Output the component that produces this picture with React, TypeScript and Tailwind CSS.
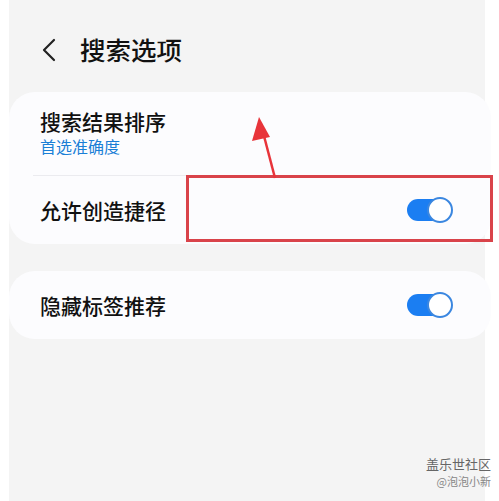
const FONT = { fontFamily: '"Noto Sans CJK SC", "Noto Sans", sans-serif' };

function Toggle() {
  return (
    <div className="relative h-[26px] w-[46px]">
      <div className="absolute left-0 top-[2px] h-[22px] w-[40px] rounded-full bg-[#1b7ef2]" />
      <div className="absolute right-0 top-0 h-[26px] w-[26px] rounded-full border-2 border-[#3b87e0] bg-white" />
    </div>
  );
}

export default function App() {
  return (
    <div className="flex h-[501px] w-[499px] bg-white" style={FONT}>
      <div className="relative ml-[9px] h-full w-[476px] bg-[#f4f4f4]">
        {/* header */}
        <div className="flex h-[100px] items-center pb-[2px] pl-[33px]">
          <svg width="14" height="24" viewBox="0 0 14 24" className="mt-[1px]">
            <path d="M12 2 L2 12 L12 22" fill="none" stroke="#222" strokeWidth="2.2" strokeLinecap="round" strokeLinejoin="round" />
          </svg>
          <span className="ml-[24px] text-[25.5px] font-medium leading-none text-[#111]">搜索选项</span>
        </div>

        {/* card 1 */}
        <div className="mr-[-6px] mt-[-8px] rounded-[26px] bg-[#fcfcfe]">
          <div className="flex h-[83px] flex-col pl-[31px] pt-[15px]">
            <span className="text-[21px] font-medium leading-[28px] text-[#111]">搜索结果排序</span>
            <span className="text-[16px] leading-[22px] text-[#1a7fd6]">首选准确度</span>
          </div>
          <div className="mx-[24px] h-px bg-[#ebebef]" />
          <div className="flex h-[68px] items-center justify-between pl-[31px] pr-[38px]">
            <span className="text-[21px] font-medium leading-none text-[#111]">允许创造捷径</span>
            <Toggle />
          </div>
        </div>

        {/* card 2 */}
        <div className="mr-[-6px] mt-[27px] flex h-[68px] items-center justify-between rounded-[26px] bg-[#fcfcfe] pl-[31px] pr-[38px]">
          <span className="text-[21px] font-medium leading-none text-[#111]">隐藏标签推荐</span>
          <Toggle />
        </div>

        {/* annotation */}
        <div className="absolute left-[177px] top-[175px] h-[67px] w-[307px] border-[3px] border-[#d9434a]" />
        <svg className="absolute left-0 top-0" width="499" height="501" viewBox="0 0 499 501">
          <line x1="266" y1="178" x2="255" y2="136" stroke="#e8343a" strokeWidth="2.5" />
          <polygon points="250,117 243,141 261,137" fill="#e8343a" />
        </svg>

        {/* watermark */}
        <div className="absolute right-[-6px] top-[455px] flex flex-col items-end">
          <span className="text-[13px] leading-[17px] text-[#666]">盖乐世社区</span>
          <span className="mt-[2px] text-[11px] leading-[14px] text-[#888]">@泡泡小新</span>
        </div>
      </div>
    </div>
  );
}
